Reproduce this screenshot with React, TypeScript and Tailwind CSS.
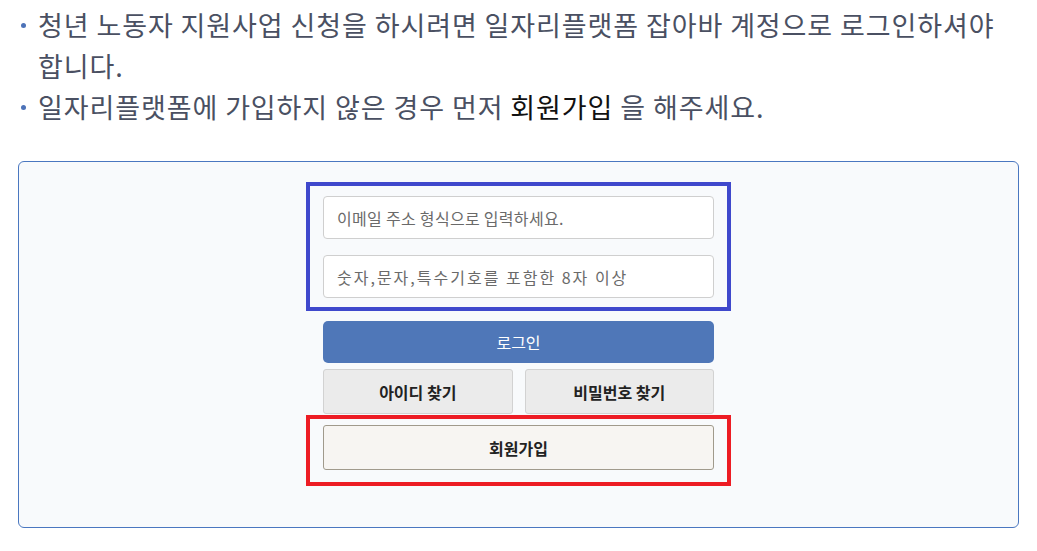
import React from "react";

export default function App() {
  const font = { fontFamily: '"Noto Sans CJK KR", "Noto Sans", sans-serif' };
  return (
    <div className="w-[1037px] h-[551px] bg-white overflow-hidden" style={font}>
      <ul className="pt-[4px] pl-[38px] pr-[20px] text-[27px] leading-[41px] text-[#4a5062] tracking-[0.9px]">
        <li className="relative">
          <span className="absolute left-[-17px] top-[19px] w-[5px] h-[5px] rounded-full bg-[#4d72b8]" />
          청년 노동자 지원사업 신청을 하시려면 일자리플랫폼 잡아바 계정으로 로그인하셔야 합니다.
        </li>
        <li className="relative">
          <span className="absolute left-[-17px] top-[19px] w-[5px] h-[5px] rounded-full bg-[#4d72b8]" />
          일자리플랫폼에 가입하지 않은 경우 먼저 <span className="text-[#111111]">회원가입</span> 을 해주세요.
        </li>
      </ul>

      <div className="mt-[34px] ml-[18px] w-[1001px] h-[367px] border border-[#4a77c0] rounded-[6px] bg-[#f8fafc] flex flex-col items-center pt-[20px]">
        <div className="w-[425px] flex flex-col">
          <div className="border-[4px] border-[#3f48cc] px-[13px] pt-[10px] pb-[9px] flex flex-col gap-[16px]">
            <div className="h-[43px] bg-white border border-[#cfcfcf] rounded-[4px] flex items-center px-[13px] text-[16px] tracking-[0.3px] text-[#6a6a6a]">
              이메일 주소 형식으로 입력하세요.
            </div>
            <div className="h-[43px] bg-white border border-[#cfcfcf] rounded-[4px] flex items-center px-[13px] text-[16px] tracking-[2px] text-[#6a6a6a]">
              숫자,문자,특수기호를 포함한 8자 이상
            </div>
          </div>
          <div className="mx-[17px] mt-[10px] h-[42px] bg-[#4f77b8] rounded-[5px] flex items-center justify-center text-[16px] text-white">
            로그인
          </div>
          <div className="mx-[17px] mt-[6px] flex gap-[12px]">
            <div className="flex-1 h-[45px] bg-[#ebebeb] border border-[#d2d2d2] rounded-[3px] flex items-center justify-center text-[16px] font-bold text-[#222222]">
              아이디 찾기
            </div>
            <div className="flex-1 h-[45px] bg-[#ebebeb] border border-[#d2d2d2] rounded-[3px] flex items-center justify-center text-[16px] font-bold text-[#222222]">
              비밀번호 찾기
            </div>
          </div>
          <div className="mt-[1px] border-[4px] border-[#ed1c24] px-[13px] pt-[6px] pb-[12px]">
            <div className="h-[45px] bg-[#f7f5f2] border border-[#a09a8c] rounded-[3px] flex items-center justify-center text-[16px] font-bold text-[#222222]">
              회원가입
            </div>
          </div>
        </div>
      </div>
    </div>
  );
}
